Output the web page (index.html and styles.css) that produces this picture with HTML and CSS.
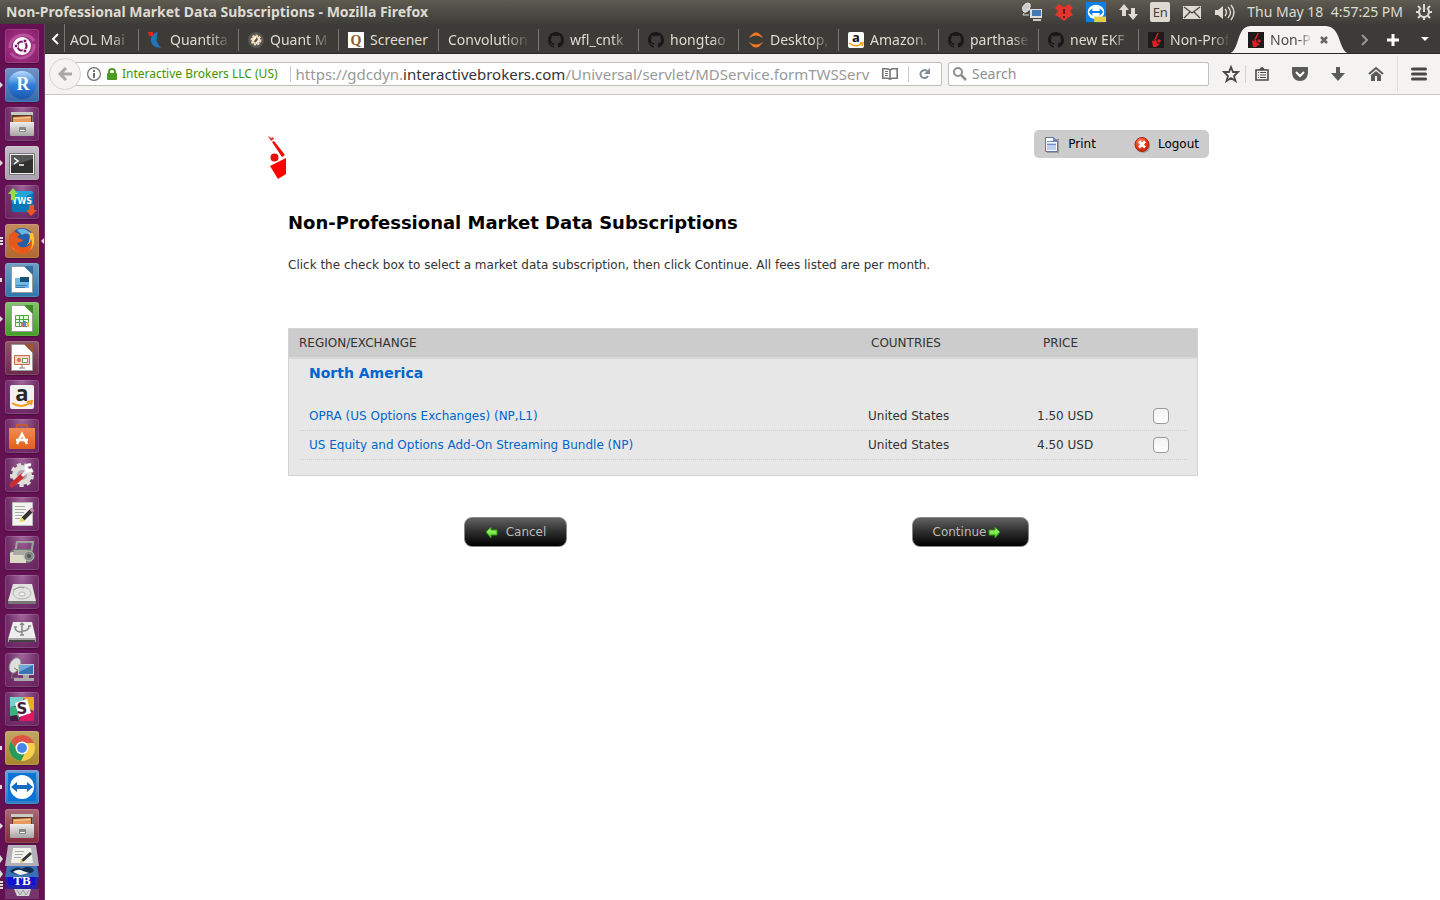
FILE: index.html
```html
<!DOCTYPE html>
<html lang="en">
<head>
<meta charset="utf-8">
<title>Non-Professional Market Data Subscriptions</title>
<link rel="stylesheet" href="styles.css">
</head>
<body>
<svg class="defs" aria-hidden="true">
  <defs>
    <linearGradient id="ball" x1="0" y1="0" x2="0" y2="1"><stop offset="0" stop-color="#b9dcff"/><stop offset=".5" stop-color="#2f7fd8"/><stop offset="1" stop-color="#1b56ae"/></linearGradient>
    <linearGradient id="steel" x1="0" y1="0" x2="0" y2="1"><stop offset="0" stop-color="#eeeeec"/><stop offset="1" stop-color="#a5a5a3"/></linearGradient>
    <linearGradient id="bag" x1="0" y1="0" x2="0" y2="1"><stop offset="0" stop-color="#f08a55"/><stop offset="1" stop-color="#e2611c"/></linearGradient>
    <linearGradient id="green" x1="0" y1="0" x2="0" y2="1"><stop offset="0" stop-color="#b4ff8a"/><stop offset="1" stop-color="#4fd31c"/></linearGradient>
    <radialGradient id="redball" cx=".4" cy=".3" r=".8"><stop offset="0" stop-color="#ff9a7a"/><stop offset=".5" stop-color="#ee3a17"/><stop offset="1" stop-color="#b81d04"/></radialGradient>
    <symbol id="github" viewBox="0 0 16 16"><path fill="#191717" d="M8 0C3.580 0 0 3.580 0 8c0 3.540 2.290 6.530 5.470 7.590.4.070.55-.17.55-.38 0-.19-.01-.82-.01-1.490-2.010.37-2.530-.49-2.690-.94-.09-.23-.48-.94-.82-1.130-.28-.15-.68-.52-.01-.53.63-.01 1.080.58 1.230.82.72 1.210 1.870.87 2.330.66.070-.52.28-.87.51-1.070-1.780-.2-3.640-.89-3.640-3.950 0-.87.31-1.590.82-2.150-.08-.2-.36-1.020.08-2.120 0 0 .67-.21 2.200.82a7.600 7.600 0 0 1 4 0c1.530-1.040 2.200-.82 2.200-.82.44 1.100.16 1.920.08 2.120.51.56.82 1.270.82 2.150 0 3.070-1.870 3.750-3.650 3.950.29.25.54.73.54 1.480 0 1.070-.01 1.930-.01 2.200 0 .21.15.46.55.38A8 8 0 0 0 16 8c0-4.420-3.580-8-8-8z"/></symbol>
    <symbol id="ib" viewBox="0 0 16 16"><rect width="16" height="16" fill="#1c1a1a"/><path fill="#e01e26" d="M9.500 1 11 1 8 7.500 6 8zM4 9l4-1 1 3 3 1-4 3H5z"/><circle cx="11" cy="9" r="1.800" fill="#e01e26"/></symbol>
    <symbol id="cabinet" viewBox="0 0 34 34"><path fill="#77756f" d="M6 6q0-1 1-1h20q1 0 1 1v10H6z"/><path fill="#c9c9c6" d="M6 5h22v3H6z"/><path fill="#5a3a24" d="M7 8h20v8H7z"/><path fill="#e79a5c" d="m8 10 18-1v6H8z"/><path fill="#f7d0a2" d="m9 11 16-1v1L9 12z"/><path fill="url(#steel)" d="M5 15h24v13q0 1-1 1H6q-1 0-1-1z"/><rect x="14" y="20" width="7" height="5" rx="1" fill="#888"/><path fill="#fff" d="M15 23h5v1h-5z"/></symbol>
    <symbol id="sheet" viewBox="0 0 34 34"><path fill="#fff" stroke="#999" d="M6.500 3.500h13l8 8v18h-21z"/></symbol>
    <symbol id="notepad" viewBox="0 0 34 34"><path fill="#f4f4ee" stroke="#bbb" d="M7.500 5.500h20v23h-20z"/><path stroke="#aaa" d="M10 9.500h10m-10 3h11m-11 3h9m-9 3h7m-7 3h5"/><path stroke="#333" stroke-width="4" d="m18 22 8-8"/><path stroke="#c77eb0" stroke-width="4" d="m26 14 2-2"/><path fill="#e8cf4c" d="m15 25 1-5 4 4z"/></symbol>
    <symbol id="dish" viewBox="0 0 34 34"><path fill="#ddd" stroke="#888" d="M10 5c-6 3-8 12-3 15 3 1 8-4 9-10 0-4-3-6-6-5z"/><path stroke="#777" fill="none" d="m9 15 5 3M8 20l-2 5h8"/><path fill="#ccc" d="M13 11h16v11H13z"/><path fill="#3973b3" d="M14 12h14v9H14z"/><path fill="#70a6dd" d="M14 12h14l-14 7z"/><path fill="#aaa" d="M18 22h6v3h-6zM9 25h20v3H9z"/></symbol>
  </defs>
</svg>

<header class="panel">
  <h1 class="panel-title">Non-Professional Market Data Subscriptions - Mozilla Firefox</h1>
  <div class="tray">
    <svg class="tray-icon" viewBox="0 0 24 20"><path fill="#ccc" stroke="#eee" d="M8 1C3 2 1 7 4 10c3 1 7-3 6-8z"/><path stroke="#ddd" fill="none" d="m6 7 4 1M4 11l-1 2h6"/><path fill="#ddd" d="M10 7h12v9H10z"/><path fill="#4379b5" d="M12 8h9v6h-9z"/><path fill="#ccc" d="M13 17h8v2h-8z"/></svg>
    <svg class="tray-icon" viewBox="0 0 24 20"><path fill="#e2362d" d="m7 2 5 3 5-3 4 4-3 3 3 4-4 2-5 4-5-4-4-2 3-4-3-3z"/><path stroke="#6b1712" stroke-width="2" d="M12 7v5m0 2v2"/></svg>
    <svg class="tray-icon" viewBox="0 0 24 24"><path fill="#0d7fe8" d="M1 1h22v22H1z"/><ellipse cx="12" cy="12" rx="9" ry="8" fill="#fff"/><path fill="#0d7fe8" d="m4 12 4-4v3h8V8l4 4-4 4v-3H8v3z"/><path fill="#e5cf48" d="M10 17h13v6H10z"/></svg>
    <svg class="tray-icon" viewBox="0 0 24 20"><path fill="#dfdbd2" d="M8 2 3 8h3v6h4V8h3zM15 6h4v6h3l-5 6-5-6h3z"/></svg>
    <span class="keyboard">En</span>
    <svg class="tray-icon" viewBox="0 0 24 20"><path fill="#dfdbd2" d="M3 4h18v13H3z"/><path fill="none" stroke="#4a4842" stroke-width="1.300" d="m4 5 8 6 8-6M4 16l6-6m10 6-6-6"/></svg>
    <svg class="tray-icon" viewBox="0 0 24 20"><path fill="#dfdbd2" d="M3 8h3l5-4v13l-5-4H3z"/><path fill="none" stroke="#dfdbd2" stroke-width="1.400" d="M13 7q3 3 0 7m3-9q5 5 0 11m3-13q6 7 0 15"/></svg>
    <time class="clock">Thu May 18&nbsp; 4:57:25 PM</time>
    <svg class="power" viewBox="0 0 18 18"><g fill="none" stroke="#dfdbd2" stroke-width="2"><path d="M6 5a5 5 0 1 0 6 0M9 1v8"/><path d="M1 9h3m10 0h3M3 15l2-2m10 2-2-2M9 14v3M3 3l2 2m10-2-2 2"/></g></svg>
  </div>
</header>

<div class="desktop">
<nav class="launcher" aria-label="Launcher">
  <div class="apps">
    <button class="app dash" aria-label="Dash"><svg viewBox="0 0 34 34"><path fill="none" stroke="#d277b9" stroke-width="3" opacity=".5" d="M5 19C4 6 23 1 29 12M29 15c1 13-16 19-23 9"/><circle cx="17" cy="17" r="9" fill="#fff"/><circle cx="17" cy="17" r="4.500" fill="none" stroke="#7c1760" stroke-width="2.200"/><g fill="#7c1760" stroke="#fff"><circle cx="11" cy="17" r="2"/><circle cx="20" cy="12" r="2"/><circle cx="20" cy="22" r="2"/></g></svg></button>
    <button class="app rstudio one" aria-label="RStudio"><svg viewBox="0 0 34 34"><circle cx="17" cy="17" r="14" fill="url(#ball)"/><text x="18" y="22" class="glyph-r">R</text></svg></button>
    <button class="app" aria-label="Files"><svg viewBox="0 0 34 34"><use href="#cabinet"/></svg></button>
    <button class="app terminal one" aria-label="Terminal"><svg viewBox="0 0 34 34"><path fill="#eee" stroke="#777" d="M4.500 7.500h25v21h-25z"/><path fill="#30302e" d="M6 9h22v18H6z"/><path fill="#555" d="M6 9h22v4L6 20z"/><path fill="none" stroke="#fff" stroke-width="1.500" d="m9 12 4 3-4 3m5 1h5"/></svg></button>
    <button class="app" aria-label="Trader Workstation"><svg viewBox="0 0 34 34"><rect x="7" y="6" width="21" height="21" rx="2" fill="#0878b9"/><path fill="#22a5d7" d="M7 8q0-2 2-2h17q2 0 2 2L7 18z"/><text x="17" y="19" class="glyph-tws">TWS</text><path fill="#8ee043" d="m8 3 5 6h-3v6H6V9H3z"/><path fill="#ee5525" d="M24 20h5v5h3l-6 6-5-6h3z"/></svg></button>
    <button class="app firefox many current" aria-label="Firefox"><svg viewBox="0 0 34 34"><circle cx="17" cy="16" r="12" fill="#265fa7"/><path fill="#66b7e8" d="M12 6q10-4 13 5-4-3-8 0z"/><path fill="#e9581b" d="M5 9C1 20 7 30 18 30c10-1 14-11 10-20q0 6-3 8c0 6-11 8-13 1l6-2c-1-3-5-2-6-4l3-3q-5-1-6-4-1 3-4 4z"/><path fill="#ffc33a" d="M28 9q4 12-4 18 5-6 2-12-1 5-4 6 5-7 1-14 3 3 5 2z"/><path fill="#ffab2f" d="M6 20q2 7 10 8-8 0-10-8z"/></svg></button>
    <button class="app writer two" aria-label="LibreOffice Writer"><svg viewBox="0 0 34 34"><use href="#sheet"/><path fill="#2b70a4" d="M19 3h9v9z"/><path fill="#73b7e3" d="M10 15h14v10H10z"/><path fill="#175078" d="M15 14h9v5h-9z"/><path stroke="#3978a7" d="M11 22.500h11m-11 2h9"/></svg></button>
    <button class="app calc one" aria-label="LibreOffice Calc"><svg viewBox="0 0 34 34"><use href="#sheet"/><path fill="#388e23" d="M19 3h9v9z"/><path fill="#e9ffe2" stroke="#4da637" d="M10.500 13.500h13v11h-13zm4 0v11m4-11v11m-8-7h13m-13 3h13"/><path stroke-width="2" stroke="#e96c59" d="M17 25v-4"/><path stroke-width="2" stroke="#4d93d6" d="M20 25v-6"/><path stroke-width="2" stroke="#eab13b" d="M23 25v-5"/></svg></button>
    <button class="app impress" aria-label="LibreOffice Impress"><svg viewBox="0 0 34 34"><use href="#sheet"/><path fill="#9b5532" d="M19 3h9v9z"/><path fill="#f7d5c4" stroke="#c46e4a" d="M9.500 14.500h15v9h-15z"/><circle cx="14" cy="19" r="2" fill="#d4693d"/><path fill="#fff" stroke="#63a355" d="M17.500 17.500h5v4h-5z"/><path stroke="#777" d="M17 24v3m-3 0h6"/></svg></button>
    <button class="app" aria-label="Amazon"><svg viewBox="0 0 34 34"><rect x="5" y="5" width="24" height="24" rx="2" fill="#f1f1f1"/><text x="17" y="21" class="glyph-a">a</text><path fill="none" stroke="#f49b1c" stroke-width="2" d="M7 23q9 6 18 0m-3-1 5-1-1 4"/></svg></button>
    <button class="app" aria-label="Ubuntu Software"><svg viewBox="0 0 34 34"><path fill="none" stroke="#bd5b36" stroke-width="2" d="M12 10V6h10v4"/><path fill="url(#bag)" d="M4 9h26v20q0 1-1 1H5q-1 0-1-1z"/><path fill="none" stroke="#fff" stroke-width="2.500" d="m12 25 5-10 5 10m-11-4h12"/></svg></button>
    <button class="app" aria-label="System Settings"><svg viewBox="0 0 34 34"><circle cx="17" cy="17" r="10" fill="#deded9" stroke="#deded9" stroke-width="4" stroke-dasharray="4 3"/><circle cx="17" cy="17" r="5" fill="#b9a3b3"/><path stroke="#c92d2d" stroke-width="5" stroke-linecap="round" d="m7 27 10-9"/><path stroke="#eee" stroke-width="3" d="m17 18 6-6"/><path fill="none" stroke="#fff" stroke-width="3" d="M26 7q-5-1-5 3t6 2"/></svg></button>
    <button class="app" aria-label="Text Editor"><svg viewBox="0 0 34 34"><use href="#notepad"/></svg></button>
    <button class="app" aria-label="Scanner"><svg viewBox="0 0 34 34"><path fill="none" stroke="#9da49d" stroke-width="2" d="m10 17 2-11h16l-2 12"/><path fill="#747a72" d="M5 17q1-4 6-4h15l3 10-5 4H7z"/><path fill="#dadbc2" d="M5 17q2-2 6 0h10v10H5z"/><path fill="#a6aaa0" d="M9 14h13v5H8z"/><circle cx="24" cy="20" r="5" fill="#858985" stroke="#bdc2ba"/><circle cx="24" cy="20" r="2" fill="#555"/></svg></button>
    <button class="app" aria-label="Disk"><svg viewBox="0 0 34 34"><path fill="#e2e2e0" d="M8 9h19l4 17H3z"/><path fill="#777" d="M3 26h28v2q0 1-1 1H4q-1 0-1-1z"/><ellipse cx="17" cy="18" rx="9" ry="6" fill="none" stroke="#b5b5b3"/><ellipse cx="17" cy="19" rx="3" ry="2" fill="#f5f5f5" stroke="#b5b5b3"/><path stroke="#999" fill="none" d="m8 15 7-3 4 1"/></svg></button>
    <button class="app" aria-label="USB Disk"><svg viewBox="0 0 34 34"><path fill="#eee" d="M8 8h19l4 17H3z"/><path fill="#a5a5a5" d="M3 24h28v4H3z"/><path fill="#444" d="M4 26h26v2H4z"/><path fill="none" stroke="#888" stroke-width="1.500" d="M17 9v12m0-3q-7 0-7-5m7 4q7 0 7-5M9 13h3m11-1h3m-11-1 2-2 2 2m-4 10h4"/></svg></button>
    <button class="app" aria-label="Remote Desktop"><svg viewBox="0 0 34 34"><use href="#dish"/></svg></button>
    <button class="app" aria-label="Slack"><svg viewBox="0 0 34 34"><path fill="#78d1c9" d="M5 5h14l-3 8-11 2z"/><path fill="#e9ad24" d="M19 5h10v14l-7-3z"/><path fill="#3bb180" d="M5 15h7l2 14H5z"/><path fill="#df1765" d="M14 29l3-6 12-4v10z"/><path fill="#4b173d" d="M5 24l7-1 2 6H5z"/><path fill="#fff" d="m10 11 12-4 4 14-12 4z"/><text x="17" y="22" class="glyph-s">S</text></svg></button>
    <button class="app chrome two" aria-label="Chrome"><svg viewBox="0 0 34 34"><circle cx="17" cy="17" r="13" fill="#f7cf4b"/><path fill="#dc5447" d="M6 10a13 13 0 0 1 23 2H17l-6 6z"/><path fill="#289a58" d="M6 10a13 13 0 0 0 10 20l5-10-8 1z"/><circle cx="17" cy="17" r="6.500" fill="#fff"/><circle cx="17" cy="17" r="5" fill="#4a86e8"/></svg></button>
    <button class="app teamviewer two" aria-label="TeamViewer"><svg viewBox="0 0 34 34"><rect x="3" y="3" width="28" height="28" fill="#0874d8"/><circle cx="17" cy="17" r="12" fill="#fff"/><path fill="#176bbe" d="m6 17 6-5v3h10v-3l6 5-6 5v-3H12v3z"/></svg></button>
    <button class="app files-open one" aria-label="Files window"><svg viewBox="0 0 34 34"><use href="#cabinet"/></svg></button>
  </div>
  <svg class="folded" viewBox="0 0 45 55"><path fill="#76346c" d="M5 44h34v10H5z"/><path fill="#2424a9" d="m5 32 34 0-2 12H7z"/><path fill="#1212d4" d="M8 32h27v8H8z"/><text x="22" y="40" class="glyph-tb">TB</text><path fill="#3b70b5" d="m7 20h30l2 12H5z"/><path fill="#102d52" d="M10 26q7-6 12-2 7-5 12 1-1 4-12 4t-12-3z"/><path fill="#f2f2ed" d="M13 27q5-4 10-1l6 2-9 2z"/><path fill="#b5afb9" d="M8 0h28l3 21H5z"/><path fill="#f1f1ec" d="M13 3h18l2 15H11z"/><path stroke="#aaa" d="M15 6.500h9m-9 3h8m-9 3h7"/><path stroke="#333" stroke-width="3" d="m22 16 9-8"/><path fill="#d4b94b" d="m20 18 1-4 3 3z"/><path fill="#d4d4d4" d="M14 44h17l-2 7H17z"/><path fill="none" stroke="#999" d="m17 45 3 5 3-5 3 5 3-5"/><g fill="#ddd"><path d="m0 10 3 4-3 4zM0 25l3 4-3 4z"/><path d="M0 36h3v2H0zm0 3h3v2H0zm0 3h3v2H0z"/></g></svg>
</nav>

<div class="browser">
  <div class="tabs" role="tablist">
    <button class="scroll-left" aria-label="Scroll tabs left"><svg viewBox="0 0 10 16" width="10" height="16"><path fill="none" stroke="#fff" stroke-width="2" d="M8 3 3 8l5 5"/></svg></button>
    <button class="tab first" role="tab"><span class="label">AOL Mai</span></button>
    <button class="tab" role="tab"><svg class="fav" viewBox="0 0 16 16"><path fill="#1f74bd" d="M10 0C1 2 1 11 7 15l6 1Q6 9 10 0z"/><path fill="#e4251b" d="M0 0h5v4H1z"/></svg><span class="label">Quantita</span></button>
    <button class="tab" role="tab"><svg class="fav" viewBox="0 0 16 16"><circle cx="8" cy="8" r="8" fill="#555"/><circle cx="8" cy="8" r="4" fill="#fff" stroke="#f3d5a3" stroke-width="3" stroke-dasharray="2 1"/><path fill="#555" d="m6 9 3-4 1 3-3 3z"/></svg><span class="label">Quant M</span></button>
    <button class="tab" role="tab"><svg class="fav" viewBox="0 0 16 16"><path fill="#fff" d="M0 0h16v16H0z"/><text x="8" y="13" class="glyph-q">Q</text></svg><span class="label whole">Screener</span></button>
    <button class="tab" role="tab"><span class="label wide">Convolution</span></button>
    <button class="tab" role="tab"><svg class="fav"><use href="#github"/></svg><span class="label">wfl_cntk</span></button>
    <button class="tab" role="tab"><svg class="fav"><use href="#github"/></svg><span class="label">hongtao</span></button>
    <button class="tab" role="tab"><svg class="fav" viewBox="0 0 16 16"><path fill="#f37726" d="M1 6q7-11 14 0-7-5-14 0zm0 4q7 11 14 0-7 5-14 0z"/></svg><span class="label">Desktop,</span></button>
    <button class="tab" role="tab"><svg class="fav" viewBox="0 0 16 16"><rect width="16" height="16" rx="2" fill="#fff"/><text x="8" y="10" class="glyph-az">a</text><path fill="none" stroke="#f90" stroke-width="1.500" d="M1 11q7 5 12 1m-1-1h3l-1 3"/></svg><span class="label">Amazon.</span></button>
    <button class="tab" role="tab"><svg class="fav"><use href="#github"/></svg><span class="label">parthase</span></button>
    <button class="tab" role="tab"><svg class="fav"><use href="#github"/></svg><span class="label">new EKF</span></button>
    <button class="tab last" role="tab"><svg class="fav"><use href="#ib"/></svg><span class="label">Non-Prof</span></button>
    <div class="tab active" role="tab" aria-selected="true"><svg class="tab-shape" viewBox="0 0 124 28"><path fill="#f4f3f1" d="M0 28c14-1 8-27 23-28h76c17 1 11 27 25 28z"/></svg><svg class="fav"><use href="#ib"/></svg><span class="label short">Non-P</span><button class="close" aria-label="Close tab"><svg viewBox="0 0 8 8" width="8" height="8"><path stroke="#666" stroke-width="2.500" d="m1 1 6 6m0-6L1 7"/></svg></button></div>
    <div class="tab-tools">
      <button aria-label="Scroll tabs right"><svg viewBox="0 0 8 12" width="8" height="12"><path fill="none" stroke="#999" stroke-width="2" d="m1 1 5 5-5 5"/></svg></button>
      <button class="new-tab" aria-label="New tab"><svg viewBox="0 0 12 12" width="12" height="12"><path stroke="#fff" stroke-width="3" d="M6 0v12M0 6h12"/></svg></button>
      <button aria-label="List all tabs"><svg viewBox="0 0 8 5" width="8" height="5"><path fill="#fff" d="M0 0h8L4 4z"/></svg></button>
    </div>
  </div>

  <div class="toolbar">
    <button class="back" aria-label="Back"><svg viewBox="0 0 16 16" width="16" height="16"><path fill="none" stroke="#aaa9a6" stroke-width="3" d="M15 8H3m6-6L3 8l6 6"/></svg></button>
    <div class="address">
      <svg viewBox="0 0 14 14" width="14" height="14"><circle cx="7" cy="7" r="6.400" fill="none" stroke="#6b6b6b" stroke-width="1.200"/><path fill="#6b6b6b" d="M6 3h2v2H6zm0 3h2v5H6z"/></svg>
      <svg class="lock" viewBox="0 0 10 12" width="10" height="12"><path fill="none" stroke="#4c9a22" stroke-width="2" d="M2 6V4q0-3 3-3t3 3v2"/><rect y="5" width="10" height="7" rx="1" fill="#4c9a22"/></svg>
      <span class="identity">Interactive Brokers LLC (US)</span>
      <div class="url" role="textbox" contenteditable="true" aria-label="Address" spellcheck="false">https://gdcdyn.<b>interactivebrokers.com</b>/Universal/servlet/MDService.formTWSServ</div>
      <button class="reader" aria-label="Reader view"><svg viewBox="0 0 16 12" width="16" height="12"><path fill="none" stroke="#777" stroke-width="1.600" d="M8 11V2Q6 .8 4 .8H.8v9.400H6l2 1 2-1h5.200V.8H10L8 2"/><path stroke="#777" d="M3 3.500h3m-3 2h3m-3 2h3"/></svg></button>
      <button class="reload" aria-label="Reload"><svg viewBox="0 0 12 12" width="12" height="12"><path fill="none" stroke="#7f8a96" stroke-width="2" d="M9 3a4 4 0 1 0 1 5"/><path fill="#7f8a96" d="M12 0v6H6z"/></svg></button>
    </div>
    <label class="search"><svg viewBox="0 0 14 14" width="14" height="14"><circle cx="5" cy="5" r="4" fill="none" stroke="#8e8e8c" stroke-width="2"/><path stroke="#8e8e8c" stroke-width="2.500" d="m8 8 5 5"/></svg><input type="search" placeholder="Search" aria-label="Search"></label>
    <div class="tools">
      <button aria-label="Bookmark this page"><svg viewBox="0 0 18 18" width="18" height="18"><path fill="none" stroke="#4a4a48" stroke-width="1.800" d="m9 2 2 5h5l-4 4 1.500 5L9 13l-4.500 3L6 11 2 7h5z"/></svg></button>
      <button class="list" aria-label="Bookmarks"><svg viewBox="0 0 14 16" width="14" height="16"><path fill="none" stroke="#4a4a48" stroke-width="1.600" d="M1 4h12v10H1z"/><path fill="#4a4a48" d="M4 4q3-6 6 0z"/><path stroke="#4a4a48" stroke-width="1.200" d="M3 6.500h1m1 0h6M3 9h1m1 0h6m-8 2.500h1m1 0h6"/></svg></button>
      <button aria-label="Pocket"><svg viewBox="0 0 16 14" width="16" height="14"><path fill="#5b5b59" d="M1 0h14q1 0 1 1v5q-1 8-8 8T0 6V1q0-1 1-1z"/><path fill="none" stroke="#fff" stroke-width="2" d="m4 5 4 4 4-4"/></svg></button>
      <button aria-label="Downloads"><svg viewBox="0 0 14 14" width="14" height="14"><path fill="#5b5b59" d="M5 0h4v6h5l-7 8-7-8h5z"/></svg></button>
      <button aria-label="Home"><svg viewBox="0 0 16 16" width="16" height="16"><path fill="none" stroke="#5b5b59" stroke-width="2" d="m1 8 7-6 7 6"/><path fill="#5b5b59" d="m3 9 5-4 5 4v6H9v-5H7v5H3z"/></svg></button>
      <button class="menu" aria-label="Menu"><svg viewBox="0 0 16 14" width="16" height="14"><path stroke="#484846" stroke-width="3" stroke-linecap="round" d="M1.500 2h13m-13 5h13m-13 5h13"/></svg></button>
    </div>
  </div>

  <main class="page">
    <div class="sheet">
      <div class="top">
        <svg class="logo" viewBox="0 0 20 44" width="20" height="44"><path fill="#e83a3a" d="m0 0 2 1 1 1 2-1 1 2-3 2z"/><path fill="#f50505" d="m4 6 2-1 11 14-3 2z"/><circle cx="6.500" cy="21.500" r="4" fill="#e60e0e"/><path fill="#fe0000" d="m2 30 16-8v16l-8 5z"/></svg>
        <div class="actions">
          <a href="#print"><svg viewBox="0 0 16 17" width="16" height="17"><path fill="#777" opacity=".6" d="M3 3h12v14H3z"/><path fill="#fff" stroke="#5c76ad" d="M1.500 1.500h8l4 4v10h-12z"/><path fill="#bfd0ef" d="M3 7h9v7H3z"/><path stroke="#6f8dc2" d="M3 5.500h6m-6 3h9"/><path fill="#6c86bb" d="M9 1v5h5z"/></svg>Print</a>
          <a href="#logout"><svg viewBox="0 0 16 17" width="16" height="17"><circle cx="9" cy="10" r="7" fill="#777" opacity=".5"/><circle cx="8" cy="8.500" r="7" fill="url(#redball)" stroke="#a9280f"/><path stroke="#fff" stroke-width="2.500" d="m5 5.500 6 6m0-6-6 6"/></svg>Logout</a>
        </div>
      </div>
      <div class="content">
        <h2>Non-Professional Market Data Subscriptions</h2>
        <p>Click the check box to select a market data subscription, then click Continue. All fees listed are per month.</p>
        <form>
          <table>
            <colgroup><col class="c-edge"><col><col class="c-country"><col class="c-price"><col class="c-check"><col class="c-edge"></colgroup>
            <thead><tr><td></td><th scope="col">REGION/EXCHANGE</th><th scope="col" class="h-country">COUNTRIES</th><th scope="col" class="h-price">PRICE</th><td></td><td></td></tr></thead>
            <tbody>
              <tr class="region"><td></td><th colspan="4" scope="rowgroup">North America</th><td></td></tr>
              <tr class="item"><td></td><td><a href="#opra" id="opra">OPRA (US Options Exchanges) (NP,L1)</a></td><td>United States</td><td>1.50 USD</td><td class="tick"><input type="checkbox" aria-labelledby="opra"></td><td></td></tr>
              <tr class="item"><td></td><td><a href="#bundle" id="bundle">US Equity and Options Add-On Streaming Bundle (NP)</a></td><td>United States</td><td>4.50 USD</td><td class="tick"><input type="checkbox" aria-labelledby="bundle"></td><td></td></tr>
              <tr class="end"><td colspan="6"></td></tr>
            </tbody>
          </table>
          <div class="buttons">
            <div><button type="button" class="cancel"><svg viewBox="0 0 13 12" width="13" height="12"><path fill="url(#green)" stroke="#2c9b12" d="M1 6 6 1v3h6v5H6v3z"/></svg>Cancel</button></div>
            <div><button type="button" class="continue">Continue<svg viewBox="0 0 13 12" width="13" height="12"><path fill="url(#green)" stroke="#2c9b12" d="M12 6 7 1v3H1v5h6v3z"/></svg></button></div>
          </div>
        </form>
      </div>
    </div>
  </main>
</div>
</div>
</body>
</html>
```
FILE: styles.css
```css
* { box-sizing: border-box; }
body {
  margin: 0;
  min-height: 100vh;
  display: flex;
  flex-direction: column;
  background: #fff;
  color: #333;
  font-family: "Noto Sans", "Open Sans", sans-serif;
  font-size: 14px;
}
button { margin: 0; padding: 0; border: 0; background: none; font: inherit; color: inherit; }
svg { display: block; flex: none; }
.defs { position: absolute; width: 0; height: 0; }

/* Desktop panel */
.panel {
  display: flex;
  align-items: center;
  justify-content: space-between;
  height: 24px;
  padding: 0 7px 0 6px;
  background: linear-gradient(#5e5c50, #504e47 40%, #3e3d39);
  color: #dfdbd2;
  white-space: nowrap;
}
.panel-title { margin: 0; font-size: 14px; line-height: 24px; font-weight: 700; }
.tray { display: flex; align-items: center; gap: 8px; }
.tray-icon { width: 24px; height: 22px; }
.keyboard {
  width: 20px;
  margin: 0 2px;
  border-radius: 2px;
  background: #dfdbd2;
  color: #45443f;
  font-size: 13px;
  line-height: 20px;
  text-align: center;
}
.clock { margin-left: 3px; line-height: 24px; }
.power { width: 18px; height: 18px; margin-left: 4px; }

.desktop { display: flex; flex: 1; }

/* Launcher */
.launcher { width: 45px; flex: none; padding-top: 5px; background: #631152; border-right: 1px solid #7c346d; }
.apps { display: flex; flex-direction: column; gap: 5px; padding-left: 5px; }
.app {
  position: relative;
  width: 34px;
  height: 34px;
  border-radius: 3px;
  background: radial-gradient(ellipse at 50% 0, #a0669a, #73306b 60%, #682060);
  box-shadow: inset 0 0 0 1px #ffffff22, 0 1px 1px #00000044;
}
.app svg { width: 34px; height: 34px; }
.dash { background: radial-gradient(#b0428e, #87186b); }
.rstudio { background: linear-gradient(#6f94c7, #3568ab); }
.terminal { background: linear-gradient(#c6bfc9, #a9a1ad); }
.firefox { background: linear-gradient(#c38a60, #ae682f); }
.writer { background: linear-gradient(#6d9fc2, #2c78ac); }
.calc { background: linear-gradient(#83c36c, #429f24); }
.impress { background: linear-gradient(#8f5967, #6b2a4c); }
.chrome { background: linear-gradient(#c1a763, #aa852c); }
.teamviewer { background: linear-gradient(#6fa0d5, #2c78c4); }
.files-open { background: linear-gradient(#a96976, #82293c); }
.one::before, .two::before, .many::before, .current::after { content: ""; position: absolute; }
.one::before { left: -5px; top: 14px; border: 3px solid transparent; border-left-color: #ddd; border-right: 0; }
.two::before { left: -5px; top: 15px; width: 2px; height: 4px; background: #ddd; }
.many::before { left: -5px; top: 13px; width: 3px; height: 8px; background: repeating-linear-gradient(#ddd 0 2px, transparent 2px 3px); }
.current::after { right: -5px; top: 14px; border: 3px solid transparent; border-right-color: #ddd; border-left: 0; }
.folded { width: 45px; height: 55px; margin-top: 2px; }
text { text-anchor: middle; }
.glyph-r { font: bold 18px "Liberation Serif", serif; fill: #fff; }
.glyph-tws { font: bold 8px "DejaVu Sans", sans-serif; fill: #fff; }
.glyph-a { font: bold 22px "Open Sans", sans-serif; fill: #282828; }
.glyph-s { font: bold 15px "DejaVu Sans", sans-serif; fill: #4b173d; }
.glyph-tb { font: bold 13px "Liberation Serif", serif; fill: #fff; }
.glyph-q { font: bold 14px "Liberation Serif", serif; fill: #8b5a2b; }
.glyph-az { font: bold 13px "Open Sans", sans-serif; fill: #111; }

/* Tabs */
.browser { flex: 1; min-width: 0; display: flex; flex-direction: column; }
.tabs {
  display: flex;
  height: 30px;
  padding-bottom: 1px;
  border-bottom: 1px solid #2a2927;
  background: #3c3b37;
  color: #dfdbd2;
  overflow: hidden;
}
.scroll-left { width: 20px; flex: none; padding: 2px 0 0 5px; border-right: 1px solid #777; }
.tab {
  position: relative;
  width: 100px;
  flex: none;
  display: flex;
  align-items: center;
  gap: 6px;
  padding: 3px 0 0 9px;
  text-align: left;
}
.tab::after { content: ""; position: absolute; right: 0; top: 5px; bottom: 1px; width: 1px; background: #777671; }
.tab.first { width: 74px; padding-left: 5px; }
.tab.last::after, .tab.active::after { content: none; }
.fav { width: 16px; height: 16px; }
.label {
  width: 60px;
  overflow: hidden;
  white-space: nowrap;
  line-height: 22px;
  -webkit-mask-image: linear-gradient(90deg, #000 70%, transparent);
  mask-image: linear-gradient(90deg, #000 70%, transparent);
}
.label.wide { width: 82px; }
.label.short { width: 42px; }
.label.whole { -webkit-mask-image: none; mask-image: none; }
.active { color: #4c4c4c; }
.active .fav, .active .label, .active .close { position: relative; }
.tab-shape { position: absolute; left: -12px; top: 2px; width: 124px; height: 28px; }
.close { padding: 2px; }
.tab-tools { flex: 1; display: flex; align-items: center; justify-content: space-between; padding: 3px 11px 0 22px; }
.new-tab { padding-right: 4px; }

/* Navigation toolbar */
.toolbar {
  display: flex;
  align-items: center;
  height: 41px;
  padding: 0 12px 0 4px;
  background: #f4f3f1;
  border-bottom: 1px solid #c8c6c2;
}
.back {
  position: relative;
  z-index: 1;
  display: grid;
  place-items: center;
  width: 32px;
  height: 32px;
  flex: none;
  border: 1px solid #d6d4d0;
  border-radius: 50%;
  background: #f4f3f1;
}
.address {
  flex: 1;
  min-width: 0;
  display: flex;
  align-items: center;
  height: 24px;
  margin-left: -8px;
  padding-left: 13px;
  border: 1px solid #c0beba;
  border-radius: 2px;
  background: #fff;
}
.lock { margin-left: 6px; }
.identity { margin: 0 5px; padding-right: 12px; border-right: 1px solid #ccc; color: #3c9400; font-size: 12px; line-height: 16px; white-space: nowrap; }
.url { flex: 1; min-width: 0; overflow: hidden; color: #999; font-size: 15px; white-space: nowrap; line-height: 22px; }
.url b { font-weight: 400; color: #333; }
.reader { margin: 0 10px; }
.reload { padding: 2px 11px 2px 9px; border-left: 1px solid #ccc; }
.search {
  display: flex;
  align-items: center;
  gap: 5px;
  width: 261px;
  height: 24px;
  margin-left: 6px;
  padding-left: 4px;
  border: 1px solid #c0beba;
  border-radius: 2px;
  background: #fff;
}
.search input { flex: 1; min-width: 0; padding: 0; border: 0; outline: 0; background: none; font: inherit; font-size: 14px; line-height: 22px; }
.search input::placeholder { color: #8e8e8c; }
.tools { display: flex; align-items: center; margin-left: 12px; }
.tools button { display: grid; place-items: center; width: 38px; height: 32px; }
.tools button:first-child { width: 20px; }
.tools .list { width: 36px; height: 18px; margin-left: 4px; padding-right: 4px; border-left: 1px solid #d5d3cf; }
.tools .menu { width: 31px; height: 36px; margin-left: 2px; padding-left: 12px; border-left: 1px solid #e0deda; }

/* Web page */
.page { padding-left: 1px; font-family: "DejaVu Sans", sans-serif; font-size: 12px; line-height: 14px; }
.sheet { max-width: 950px; margin: 0 auto; }
.top { display: flex; justify-content: space-between; align-items: flex-start; padding: 35px 9px 0 0; }
.logo { margin-top: 6px; }
.actions { display: flex; gap: 38px; padding: 6px 10px; border-radius: 5px; background: #ccc; }
.actions a { display: flex; align-items: center; gap: 8px; height: 16px; color: #000; text-decoration: none; }
.content { padding: 0 20px; }
h2 { margin: 32px 0 24px; color: #000; font-size: 18px; line-height: 22px; }
.content p { margin: 0 0 56px; }
table { width: 100%; border-collapse: separate; border-spacing: 0; table-layout: fixed; border: 1px solid #d3d3d3; background: #e7e7e7; }
th, td { padding: 0; text-align: left; font-weight: 400; }
.c-edge { width: 10px; }
.c-country { width: 169px; }
.c-price { width: 107px; }
.c-check { width: 53px; }
thead th, thead td { height: 30px; border-bottom: 2px solid #d8d8d8; background: #ccc; }
thead .h-country { padding-left: 13px; }
thead .h-price { padding-left: 16px; }
.region th { height: 43px; padding: 5px 0 0 10px; vertical-align: top; color: #06c; font-size: 14px; line-height: 18px; font-weight: 700; }
.item td { height: 29px; padding-left: 10px; }
.item td:first-child, .item td:last-child { padding: 0; }
.item td:not(:first-child):not(:last-child) { border-bottom: 1px dotted #d0d0d0; }
.item a { color: #06c; text-decoration: none; }
.item .tick { padding: 0; text-align: center; }
.end td { height: 15px; }
input[type="checkbox"] {
  appearance: none;
  display: block;
  width: 16px;
  height: 16px;
  margin: 0 auto;
  border: 1px solid #999;
  border-radius: 4px;
  background: linear-gradient(#f2f2f2, #fff);
}
input[type="checkbox"]:checked { background: #06c; }
.buttons { display: grid; grid-template-columns: 1fr 1fr; margin-top: 41px; }
.buttons div { display: flex; justify-content: center; }
.buttons button {
  display: flex;
  align-items: center;
  gap: 8px;
  height: 30px;
  padding: 0 20px;
  border: 1px solid #888;
  border-radius: 8px;
  background: linear-gradient(#626262, #2d2d2d 50%, #000);
  color: #bbb;
}
.buttons .continue { gap: 2px; padding: 0 27px 0 20px; }
```
